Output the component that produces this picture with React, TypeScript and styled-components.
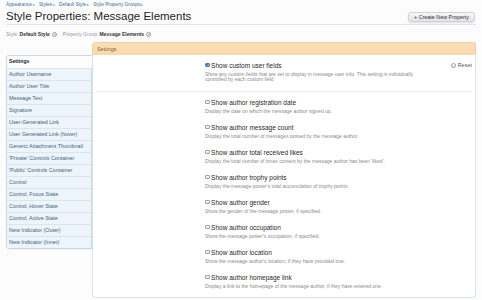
import React from "react";
import styled, { createGlobalStyle } from "styled-components";

const Global = createGlobalStyle`
  html, body { margin: 0; padding: 0; background: #fcfcfd; }
  body { font-family: "Liberation Sans", Arial, sans-serif; color: #222; }
  * { box-sizing: border-box; }
`;

const Page = styled.div`
  width: 482px;
  height: 300px;
  overflow: hidden;
  padding: 1px 6px 0 6px;
`;

const Breadcrumb = styled.div`
  display: flex;
  gap: 4px;
  font-size: 4.8px;
  line-height: 7px;
  color: #3d6a99;
  height: 8px;
`;

const Crumb = styled.span`
  &::after { content: " ▸"; font-size: 3.6px; color: #7a95b0; }
`;

const TitleBar = styled.div`
  display: flex;
  justify-content: space-between;
  align-items: center;
  height: 16px;
  border-bottom: 1px solid #e4e5ea;
`;

const Title = styled.h1`
  margin: 0;
  font-size: 11.5px;
  font-weight: normal;
  color: #252525;
  line-height: 15px;
`;

const Button = styled.button`
  font-family: inherit;
  font-size: 5.4px;
  color: #2f2f2f;
  height: 10px;
  padding: 0 5px;
  border: 1px solid #d2d3d8;
  border-radius: 3px;
  background: linear-gradient(#f7f7f9, #e2e3e8);
  box-shadow: 0 1px 2px rgba(0,0,0,0.12);
  margin-right: 1px;
`;

const FilterRow = styled.div`
  display: flex;
  align-items: center;
  gap: 6px;
  height: 17px;
  padding-top: 1px;
  font-size: 5px;
  color: #9a9a9a;
`;

const Filter = styled.span`
  display: flex;
  align-items: center;
  gap: 1px;
`;

const FilterValue = styled.b`
  color: #333;
`;

const SelectArrow = styled.span`
  display: inline-block;
  width: 5px;
  height: 5px;
  border: 0.6px solid #999;
  border-radius: 50%;
  margin-left: 1px;
  position: relative;
  &::after {
    content: "";
    position: absolute;
    left: 1.2px;
    top: 1.3px;
    border-left: 1.1px solid transparent;
    border-right: 1.1px solid transparent;
    border-top: 1.4px solid #777;
  }
`;

const Tabs = styled.div`
  display: grid;
  grid-template-columns: 86px 1fr;
`;

const Side = styled.div`
  padding-top: 13px;
`;

const SideList = styled.ul`
  list-style: none;
  margin: 0;
  padding: 0;
  border: 1px solid #c9d9e6;
  border-right: none;
  border-radius: 3px 0 0 4px;
  overflow: hidden;
  box-shadow: 0 1px 1px rgba(0,0,0,0.05);
`;

const SideItem = styled.li<{ $active?: boolean }>`
  height: 12px;
  line-height: 11px;
  padding-left: 2px;
  font-size: ${(p) => (p.$active ? "5.2px" : "5.4px")};
  color: ${(p) => (p.$active ? "#1d1d1d" : "#41617f")};
  font-weight: ${(p) => (p.$active ? "bold" : "normal")};
  background: ${(p) => (p.$active ? "#fdfdfe" : "#eef5fa")};
  border-top: ${(p) => (p.$active ? "none" : "1px solid #d9e6f0")};
  border-right: ${(p) => (p.$active ? "none" : "1px solid #c9d9e6")};
  white-space: nowrap;
`;

const Main = styled.div`
  display: flex;
  flex-direction: column;
`;

const Header = styled.div`
  height: 13px;
  background: linear-gradient(#fbdfb8, #f9d8ab);
  border-radius: 4px 3px 0 0;
  border: 1px solid #f0cfa0;
  border-bottom: none;
  font-size: 5.4px;
  line-height: 12px;
  color: #8a5d2f;
  padding-left: 4px;
`;

const Panel = styled.div`
  height: 243px;
  background: #fff;
  border: 1px solid #d6e2ec;
  border-top: none;
  border-radius: 0 0 4px 4px;
  padding: 0 3px;
`;

const FirstRow = styled.div`
  display: flex;
  height: 37px;
  padding: 7px 0 0 109px;
  border-bottom: 1px solid #e7ebf0;
`;

const Row = styled.div`
  height: 25px;
  padding: 7px 0 0 109px;
`;

const RowBody = styled.div`
  flex: 1;
`;

const Label = styled.label`
  display: flex;
  align-items: center;
  gap: 1.5px;
  height: 6px;
  font-size: 6.5px;
  color: #1f1f1f;
  white-space: nowrap;
`;

const Box = styled.span<{ $checked?: boolean }>`
  width: 4.6px;
  height: 4.6px;
  border: 0.6px solid ${(p) => (p.$checked ? "#5a7fb8" : "#9aa0a8")};
  border-radius: 1px;
  background: linear-gradient(#fff, #e8e8ec);
  display: inline-flex;
  align-items: center;
  justify-content: center;
  flex: none;
`;

const Desc = styled.div`
  margin-top: 3.5px;
  font-size: 5px;
  line-height: 5px;
  color: #8a8a8a;
  white-space: nowrap;
`;

const Reset = styled.label`
  display: flex;
  align-items: center;
  gap: 2px;
  height: 6px;
  font-size: 5.5px;
  color: #555;
`;

const Radio = styled.span`
  width: 5px;
  height: 5px;
  border-radius: 50%;
  border: 0.6px solid #9aa0a8;
  background: linear-gradient(#fff, #e6e6ea);
`;

const Check = () => (
  <svg width="4" height="4" viewBox="0 0 10 10">
    <rect x="0" y="0" width="10" height="10" fill="#3b6fc4" rx="1" />
    <path d="M2 5.2 L4.2 7.4 L8.2 2.6" stroke="#fff" strokeWidth="1.6" fill="none" />
  </svg>
);

const sideItems = [
  "Author Username",
  "Author User Title",
  "Message Text",
  "Signature",
  "User-Generated Link",
  "User Generated Link (hover)",
  "Generic Attachment Thumbnail",
  "'Private' Controls Container",
  "'Public' Controls Container",
  "Control",
  "Control, Focus State",
  "Control, Hover State",
  "Control, Active State",
  "New Indicator (Outer)",
  "New Indicator (Inner)",
];

const options = [
  ["Show author registration date", "Display the date on which the message author signed up."],
  ["Show author message count", "Display the total number of messages posted by the message author."],
  ["Show author total received likes", "Display the total number of times content by the message author has been 'liked'."],
  ["Show author trophy points", "Display the message poster's total accumulation of trophy points."],
  ["Show author gender", "Show the gender of the message poster, if specified."],
  ["Show author occupation", "Show the message poster's occupation, if specified."],
  ["Show author location", "Show the message author's location, if they have provided one."],
  ["Show author homepage link", "Display a link to the homepage of the message author, if they have entered one."],
];

export default function App() {
  return (
    <Page>
      <Global />
      <Breadcrumb>
        <Crumb>Appearance</Crumb>
        <Crumb>Styles</Crumb>
        <Crumb>Default Style</Crumb>
        <Crumb>Style Property Groups</Crumb>
      </Breadcrumb>
      <TitleBar>
        <Title>Style Properties: Message Elements</Title>
        <Button>+ Create New Property</Button>
      </TitleBar>
      <FilterRow>
        <Filter>
          Style: <FilterValue>Default Style</FilterValue>
          <SelectArrow />
        </Filter>
        <Filter>
          Property Group: <FilterValue>Message Elements</FilterValue>
          <SelectArrow />
        </Filter>
      </FilterRow>
      <Tabs>
        <Side>
          <SideList>
            <SideItem $active>Settings</SideItem>
            {sideItems.map((s) => (
              <SideItem key={s}>{s}</SideItem>
            ))}
          </SideList>
        </Side>
        <Main>
          <Header>Settings</Header>
          <Panel>
            <FirstRow>
              <RowBody>
                <Label>
                  <Box $checked>
                    <Check />
                  </Box>
                  Show custom user fields
                </Label>
                <Desc>
                  Show any custom fields that are set to display in message user info. This setting is individually
                  <br />
                  controlled by each custom field
                </Desc>
              </RowBody>
              <Reset>
                <Radio />
                Reset
              </Reset>
            </FirstRow>
            {options.map(([l, d]) => (
              <Row key={l}>
                <Label>
                  <Box />
                  {l}
                </Label>
                <Desc>{d}</Desc>
              </Row>
            ))}
          </Panel>
        </Main>
      </Tabs>
    </Page>
  );
}
